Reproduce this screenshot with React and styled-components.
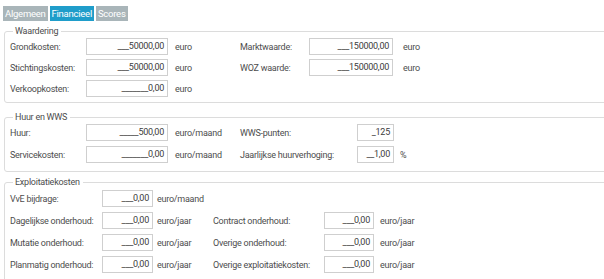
import React from "react";
import styled, { createGlobalStyle } from "styled-components";

const Global = createGlobalStyle`
  html, body { margin: 0; padding: 0; background: #fff; overflow: hidden; }
  body { font-family: Roboto, "Noto Sans", sans-serif; }
`;

const Page = styled.div`
  width: 620px;
  padding: 6px 0 0 3px;
  box-sizing: border-box;
  font-size: 9px;
  letter-spacing: -0.25px;
  color: #4d4d4d;
`;

const Tabs = styled.div`
  display: flex;
  gap: 2px;
`;

const Tab = styled.div`
  height: 15px;
  line-height: 15px;
  padding: 0 2px;
  min-width: ${(p) => p.w}px;
  box-sizing: border-box;
  text-align: center;
  color: #fff;
  font-size: 9.5px;
  background: ${(p) => (p.active ? "#1f9dca" : "#a9b5b9")};
`;

const Group = styled.fieldset`
  margin: ${(p) => p.mt}px 0 0 1px;
  padding: ${(p) => p.pt}px 0 ${(p) => p.pb}px 5px;
  border: 1px solid #dcdcdc;
  border-radius: 3px;
  min-width: 0;
`;

const Legend = styled.legend`
  padding: 0 3px 0 2px;
  margin-left: 3px;
  font-size: 9px;
  color: #4d4d4d;
  line-height: 10px;
`;

const Grid = styled.div`
  display: grid;
  grid-template-columns: ${(p) => p.cols};
  row-gap: ${(p) => p.gap}px;
  align-items: center;
`;

const Label = styled.div`
  white-space: nowrap;
`;

const Field = styled.div`
  height: 17px;
  box-sizing: border-box;
  border: 1px solid #cfcfcf;
  background: #fff;
  text-align: right;
  line-height: 15px;
  padding-right: 3px;
  color: #3c3c3c;
`;

const Unit = styled.div`
  padding-left: ${(p) => p.pl}px;
  white-space: nowrap;
`;

const Empty = styled.div``;

function Row({ label, value, unit, upl, label2, value2, unit2, u2pl }) {
  return (
    <>
      <Label>{label}</Label>
      <Field>{value}</Field>
      <Unit pl={upl}>{unit}</Unit>
      {label2 ? <Label>{label2}</Label> : <Empty />}
      {label2 ? <Field>{value2}</Field> : <Empty />}
      {label2 ? <Unit pl={u2pl}>{unit2}</Unit> : <Empty />}
    </>
  );
}

export default function App() {
  return (
    <>
      <Global />
      <Page>
        <Tabs>
          <Tab w={42}>Algemeen</Tab>
          <Tab w={40} active>Financieel</Tab>
          <Tab w={28}>Scores</Tab>
        </Tabs>

        <Group mt={5} pt={2} pb={5}>
          <Legend>Waardering</Legend>
          <Grid cols="76px 82px 72px 69px 84px auto" gap={4}>
            <Row label="Grondkosten:" value="___50000,00" unit="euro" upl={7}
              label2="Marktwaarde:" value2="___150000,00" unit2="euro" u2pl={10} />
            <Row label="Stichtingskosten:" value="___50000,00" unit="euro" upl={7}
              label2="WOZ waarde:" value2="___150000,00" unit2="euro" u2pl={10} />
            <Row label="Verkoopkosten:" value="_______0,00" unit="euro" upl={7} />
          </Grid>
        </Group>

        <Group mt={9} pt={2} pb={8}>
          <Legend>Huur en WWS</Legend>
          <Grid cols="76px 82px 72px 117px 37px auto" gap={5}>
            <Row label="Huur:" value="_____500,00" unit="euro/maand" upl={7}
              label2="WWS-punten:" value2="_125" unit2="" u2pl={6} />
            <Row label="Servicekosten:" value="_______0,00" unit="euro/maand" upl={7}
              label2="Jaarlijkse huurverhoging:" value2="__1,00" unit2="%" u2pl={6} />
          </Grid>
        </Group>

        <Group mt={5} pt={3} pb={8}>
          <Legend>Exploitatiekosten</Legend>
          <Grid cols="92px 51px 60px 111px 50px auto" gap={5}>
            <Row label="VvE bijdrage:" value="___0,00" unit="euro/maand" upl={4} />
            <Row label="Dagelijkse onderhoud:" value="___0,00" unit="euro/jaar" upl={4}
              label2="Contract onderhoud:" value2="___0,00" unit2="euro/jaar" u2pl={6} />
            <Row label="Mutatie onderhoud:" value="___0,00" unit="euro/jaar" upl={4}
              label2="Overige onderhoud:" value2="___0,00" unit2="euro/jaar" u2pl={6} />
            <Row label="Planmatig onderhoud:" value="___0,00" unit="euro/jaar" upl={4}
              label2="Overige exploitatiekosten:" value2="___0,00" unit2="euro/jaar" u2pl={6} />
          </Grid>
        </Group>
      </Page>
    </>
  );
}
